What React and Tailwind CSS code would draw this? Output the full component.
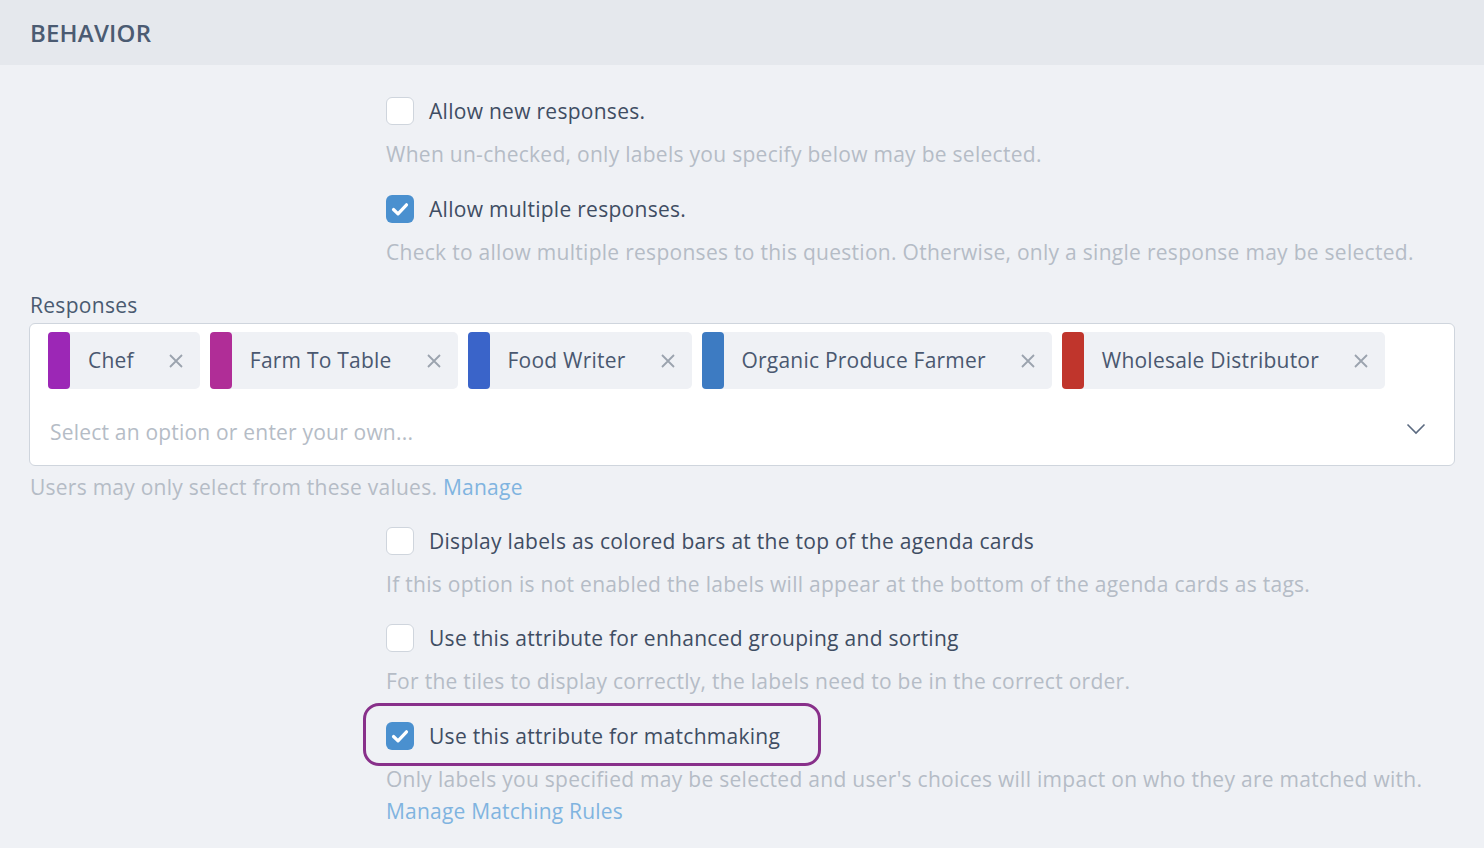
import React from "react";

const font = { fontFamily: '"Open Sans", "Noto Sans", sans-serif' };

function Check({ checked }) {
  if (checked) {
    return (
      <div className="w-[28px] h-[28px] rounded-[6px] bg-[#4a90cf] flex items-center justify-center shrink-0">
        <svg width="28" height="28" viewBox="0 0 28 28" fill="none">
          <path d="M7.5 14.5 L12 18.8 L20.5 9.8" stroke="white" strokeWidth="3.2" strokeLinecap="round" strokeLinejoin="round" />
        </svg>
      </div>
    );
  }
  return <div className="w-[28px] h-[28px] rounded-[6px] bg-white border border-[#cfd5dd] shrink-0" />;
}

function Option({ checked, label, help, highlight, children }) {
  return (
    <div className="pl-[386px]">
      <div className="relative flex items-center h-[28px]">
        {highlight && (
          <div className="absolute left-[-23px] top-[-19px] w-[458px] h-[63px] rounded-[16px] border-[3px] border-[#88308a]" />
        )}
        <Check checked={checked} />
        <span className="ml-[15px] text-[21px] text-[#3f4d63] leading-[28px] tracking-[0.28px] whitespace-nowrap">{label}</span>
      </div>
      <div className="mt-[15px] text-[21px] leading-[28px] text-[#b5bcc6] tracking-[0.28px] whitespace-nowrap">{help}</div>
      {children}
    </div>
  );
}

const tags = [
  { name: "Chef", color: "#9c27b6" },
  { name: "Farm To Table", color: "#b02d97" },
  { name: "Food Writer", color: "#3a64c9" },
  { name: "Organic Produce Farmer", color: "#3d7bc2" },
  { name: "Wholesale Distributor", color: "#c0352c" },
];

function Tag({ name, color }) {
  return (
    <div className="flex items-center h-[57px] bg-[#eff1f5] rounded-[5px]">
      <div className="w-[22px] h-[57px] rounded-[4px]" style={{ backgroundColor: color }} />
      <span className="ml-[18px] text-[21px] text-[#4a5870] tracking-[0.22px] whitespace-nowrap">{name}</span>
      <svg className="ml-[35px] mr-[17px]" width="14" height="14" viewBox="0 0 14 14">
        <path d="M1 1 L13 13 M13 1 L1 13" stroke="#9ba3ae" strokeWidth="1.8" />
      </svg>
    </div>
  );
}

export default function App() {
  return (
    <div className="w-[1484px] h-[848px] bg-[#eff1f5] overflow-hidden" style={font}>
      <div className="h-[65px] bg-[#e5e8ed] flex items-center pl-[30px]">
        <span className="text-[24px] font-semibold text-[#4b5b72] tracking-[0.2px]">BEHAVIOR</span>
      </div>
      <div className="pt-[32px]">
        <Option checked={false} label="Allow new responses." help="When un-checked, only labels you specify below may be selected." />
        <div className="mt-[27px]">
          <Option checked={true} label="Allow multiple responses." help="Check to allow multiple responses to this question. Otherwise, only a single response may be selected." />
        </div>
        <div className="mt-[25px] pl-[30px] text-[21px] leading-[28px] tracking-[0.3px] text-[#4a5a70]">Responses</div>
        <div className="mt-[4px] ml-[29px] w-[1426px] h-[143px] bg-white border border-[#cfd5dd] rounded-[6px] pt-[8px] pl-[18px] pr-[28px]">
          <div className="flex gap-[10px]">
            {tags.map((t) => (
              <Tag key={t.name} {...t} />
            ))}
          </div>
          <div className="flex items-center justify-between mt-[29px] pl-[2px]">
            <span className="text-[21px] text-[#b5bcc6] leading-[28px] tracking-[0.2px]">Select an option or enter your own...</span>
            <svg width="20" height="12" viewBox="0 0 20 12" fill="none" className="mt-[-6px]">
              <path d="M1.5 1.5 L10 10 L18.5 1.5" stroke="#5b6a80" strokeWidth="1.6" />
            </svg>
          </div>
        </div>
        <div className="mt-[7px] pl-[30px] text-[21px] leading-[28px] tracking-[0.25px] text-[#b5bcc6]">
          Users may only select from these values. <span className="text-[#80b4e0]">Manage</span>
        </div>
        <div className="mt-[26px]">
          <Option checked={false} label="Display labels as colored bars at the top of the agenda cards" help="If this option is not enabled the labels will appear at the bottom of the agenda cards as tags." />
        </div>
        <div className="mt-[26px]">
          <Option checked={false} label="Use this attribute for enhanced grouping and sorting" help="For the tiles to display correctly, the labels need to be in the correct order." />
        </div>
        <div className="mt-[27px]">
          <Option checked={true} highlight label="Use this attribute for matchmaking" help="Only labels you specified may be selected and user's choices will impact on who they are matched with.">
            <div className="mt-[4px] text-[21px] leading-[28px] tracking-[0.2px] text-[#80b4e0]">Manage Matching Rules</div>
          </Option>
        </div>
      </div>
    </div>
  );
}
